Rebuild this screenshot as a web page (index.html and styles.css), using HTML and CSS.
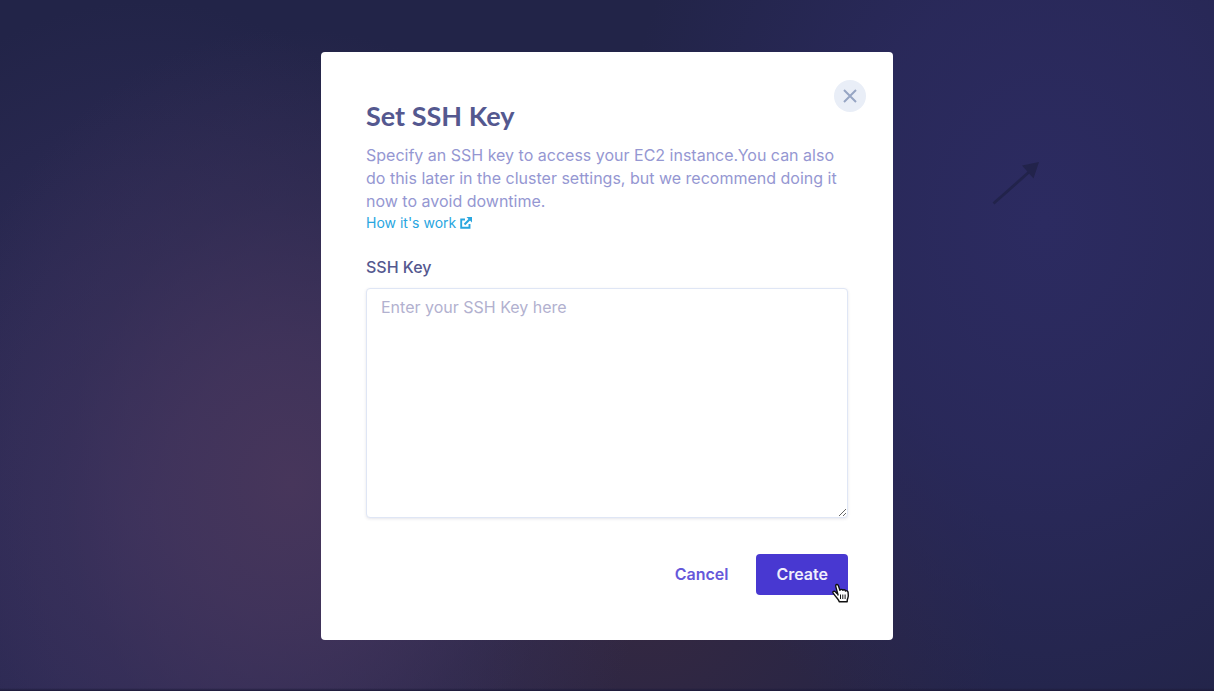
FILE: index.html
```html
<!DOCTYPE html>
<html lang="en">
<head>
<meta charset="utf-8">
<meta name="viewport" content="width=device-width, initial-scale=1">
<title>Set SSH Key</title>
<link rel="stylesheet" href="styles.css">
</head>
<body>
<main class="backdrop">
  <svg class="arrow" width="48" height="44" viewBox="0 0 48 44" aria-hidden="true">
    <path d="M1.500 42.500 37 11" stroke="currentColor" stroke-width="2.800" fill="none"/>
    <path d="M47 1 30 4.500 41.500 17.500z" fill="currentColor"/>
  </svg>
  <form class="modal" role="dialog" aria-labelledby="modal-title">
    <button class="close" type="button" aria-label="Close">
      <svg width="14" height="14" viewBox="0 0 14 14" aria-hidden="true"><path d="M1 1l12 12M13 1L1 13" stroke="currentColor" stroke-width="2" fill="none"/></svg>
    </button>
    <h1 class="title" id="modal-title">Set SSH Key</h1>
    <p class="description">Specify an SSH key to access your EC2 instance.You can also do this later in the cluster settings, but we recommend doing it now to avoid downtime.</p>
    <a class="help" href="#">How it's work
      <svg width="12" height="12" viewBox="0 0 12 12" aria-hidden="true"><path d="M5 2.500H1.200v8.300h8.300V7" stroke="currentColor" stroke-width="1.900" fill="none"/><path d="M4.500 7.500 9.500 2.500" stroke="currentColor" stroke-width="2.200"/><path d="M6.500 0H12v5.500z" fill="currentColor"/></svg>
    </a>
    <label class="label" for="ssh-key">SSH Key</label>
    <textarea class="field" id="ssh-key" placeholder="Enter your SSH Key here"></textarea>
    <div class="actions">
      <button class="button cancel" type="button">Cancel</button>
      <button class="button create" type="submit">Create
        <svg class="pointer" width="18" height="20" viewBox="0 0 18 20" aria-hidden="true"><path d="M6.200 12.500 3.800 3.600C3.200 1.400 5.700.6 6.400 2.700L7.900 7.300C8.300 6 10.300 6 10.800 7.300 11.400 6.300 13.200 6.600 13.500 8 14.300 7.200 16 7.800 16.100 9.400L16.300 12.700C16.400 14.500 15.300 15.300 15.200 17.800V18.800H7.200C7 16.800 4.700 15 2.800 12.300L1 9.800C.5 8.500 2.300 7.700 3.400 8.900L5.200 10.800" fill="#fff" stroke="#111" stroke-width="1.400" stroke-linejoin="round"/><path d="M8.500 11.500v4.500M10.800 11.500v4.500M13.100 11.500v4.500" stroke="#111" stroke-width="1"/></svg>
      </button>
    </div>
  </form>
</main>
</body>
</html>
```
FILE: styles.css
```css
*, *::before, *::after { box-sizing: border-box; }

body {
  margin: 0;
  font: 16px/23px Inter, Roboto, sans-serif;
  color: #54588f;
}

.backdrop {
  position: relative;
  display: flex;
  align-items: center;
  justify-content: center;
  min-height: 100vh;
  padding: 24px;
  background:
    radial-gradient(ellipse 30% 66% at 24% 70%, #47365b 0%, #44355bcc 30%, #3b315780 62%, #2b294d00 100%),
    radial-gradient(ellipse 32% 75% at 12% 75%, #373061 0%, #37306100 100%),
    radial-gradient(ellipse 35% 80% at 86% 32%, #2c2b61 0%, #2b2a5ecc 45%, #22244800 100%),
    radial-gradient(ellipse 30% 45% at 53% 88%, #342841 0%, #34284100 100%),
    #222448;
}

.backdrop::after {
  content: "";
  position: absolute;
  inset: auto 0 0;
  height: 3px;
  background: linear-gradient(#1d1b3a00, #1d1b3a);
}

.arrow {
  position: absolute;
  top: 161px;
  right: 174px;
  color: #22234b;
}

.modal {
  position: relative;
  display: flex;
  flex-direction: column;
  width: 100%;
  max-width: 572px;
  padding: 45px;
  border-radius: 4px;
  background: #fff;
}

.close {
  position: absolute;
  top: 28px;
  right: 27px;
  display: grid;
  place-items: center;
  width: 32px;
  height: 32px;
  padding: 0;
  border: 0;
  border-radius: 50%;
  background: #e9eef7;
  color: #96a5c4;
}

.title {
  margin: 0 0 9px;
  font: bold 27px/38px Lato, sans-serif;
}

.description {
  margin: 0;
  color: #9597d2;
}

.help {
  display: flex;
  align-items: center;
  align-self: flex-start;
  gap: 4px;
  font-size: 14px;
  line-height: 20px;
  color: #29a6df;
  text-decoration: none;
}

.label {
  margin: 22px 0 9px;
  font-weight: 500;
  line-height: 24px;
}

.field {
  width: 100%;
  height: 230px;
  padding: 7px 14px;
  border: 1px solid #dfe6f5;
  border-radius: 4px;
  box-shadow: 0 1px 3px #32325d1f;
  font: inherit;
  color: inherit;
  outline: 0;
  resize: vertical;
}

.field::placeholder { color: #b2b1cf; }

.actions {
  display: flex;
  justify-content: flex-end;
  gap: 8px;
  margin-top: 36px;
}

.button {
  position: relative;
  height: 41px;
  padding: 0 20px;
  border: 0;
  border-radius: 4px;
  font: 600 16px/24px Inter, Roboto, sans-serif;
}

.cancel { background: none; color: #6558da; }

.create { background: #4838d1; color: #f0eefc; cursor: pointer; }

.pointer {
  position: absolute;
  right: -2px;
  bottom: -8px;
}
```
